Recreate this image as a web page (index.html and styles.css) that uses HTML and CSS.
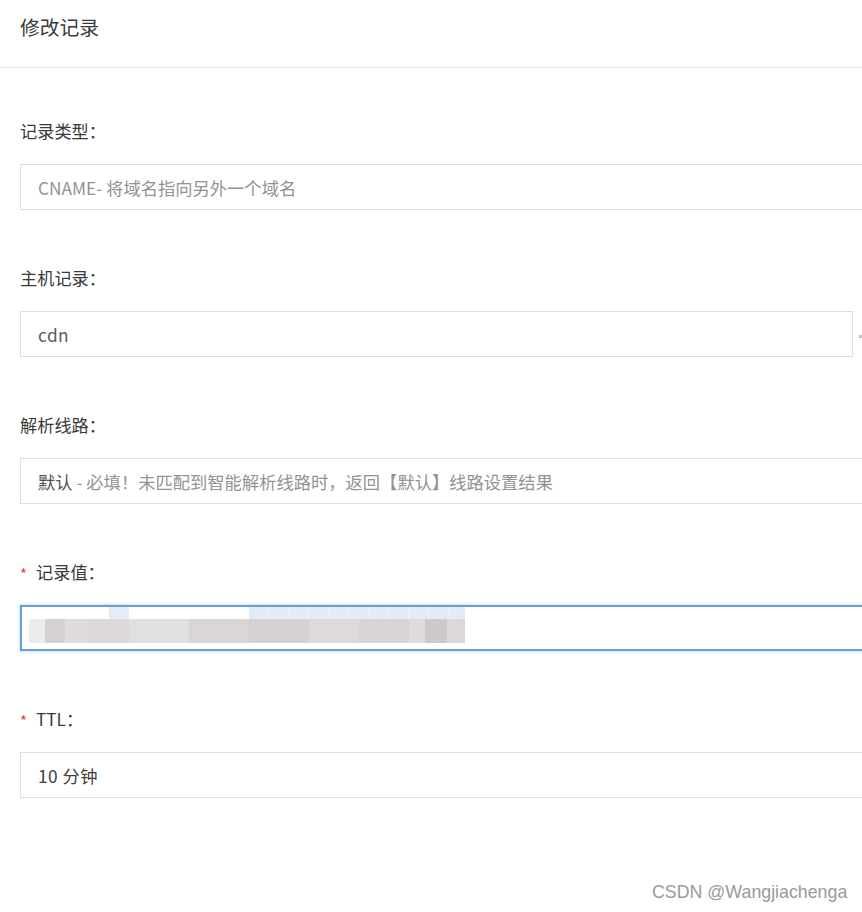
FILE: index.html
```html
<!DOCTYPE html>
<html lang="zh-CN">
<head>
<meta charset="utf-8">
<title>修改记录</title>
<link rel="stylesheet" href="styles.css">
</head>
<body>
<div class="page">
  <header class="header">
    <h1 class="title">修改记录</h1>
  </header>
  <form class="form">
    <div class="field">
      <div class="label">记录类型：</div>
      <div class="input wide"><span class="muted">CNAME- 将域名指向另外一个域名</span></div>
    </div>
    <div class="field">
      <div class="label">主机记录：</div>
      <div class="row">
        <div class="input host"><span class="val">cdn</span></div>
        <span class="dot"></span>
      </div>
    </div>
    <div class="field">
      <div class="label">解析线路：</div>
      <div class="input wide"><span class="strong">默认</span><span class="muted">&nbsp;- 必填！未匹配到智能解析线路时，返回【默认】线路设置结果</span></div>
    </div>
    <div class="field">
      <div class="label"><span class="req">*</span>记录值：</div>
      <div class="input wide focus">
        <div class="blur">
          <div class="blur-top">
            <span class="gap g1"></span><span class="tile t1"></span><span class="gap g2"></span><span class="tile t2"></span>
          </div>
          <div class="blur-strip"></div>
        </div>
      </div>
    </div>
    <div class="field">
      <div class="label"><span class="req">*</span>TTL：</div>
      <div class="input wide"><span class="val dark">10 分钟</span></div>
    </div>
  </form>
  <div class="watermark">CSDN @Wangjiachenga</div>
</div>
</body>
</html>
```
FILE: styles.css
```css
html, body {
  margin: 0;
  padding: 0;
  background: #ffffff;
}
body {
  width: 862px;
  height: 912px;
  overflow: hidden;
  font-family: "Noto Sans CJK SC", "Liberation Sans", sans-serif;
  color: #333;
}
.page {
  position: relative;
  width: 862px;
  height: 912px;
  overflow: hidden;
}
.header {
  height: 67px;
  border-bottom: 1px solid #ececec;
  display: flex;
  align-items: center;
  padding-left: 20px;
  box-sizing: content-box;
}
.title {
  margin: 0;
  font-size: 19.8px;
  font-weight: 400;
  color: #3a3a3a;
  line-height: 24px;
  padding-bottom: 14px;
}
.form {
  padding: 51px 0 0 20px;
  display: flex;
  flex-direction: column;
}
.field {
  margin-bottom: 56px;
}
.label {
  font-size: 17.2px;
  line-height: 24px;
  height: 24px;
  color: #3a3a3a;
  margin-bottom: 21px;
  display: flex;
  align-items: center;
}
.req {
  color: #e2483d;
  font-size: 15px;
  width: 16px;
  line-height: 24px;
  padding-top: 4px;
}
.row {
  display: flex;
  align-items: center;
}
.input {
  box-sizing: border-box;
  height: 46px;
  border: 1px solid #dedede;
  background: #fff;
  display: flex;
  align-items: center;
  padding-left: 17px;
  font-size: 17.3px;
  white-space: nowrap;
}
.wide {
  width: 880px;
}
.host {
  width: 833px;
}
.dot {
  width: 3px;
  height: 3px;
  background: #c4c4c4;
  margin-left: 6px;
  margin-top: 4px;
}
.muted {
  color: #939393;
}
.strong {
  color: #505050;
}
.val {
  color: #5a5a5a;
  letter-spacing: 0.5px;
}
.dark {
  color: #404040;
}
.focus {
  border: 2px solid #6b9fd6;
  box-shadow: 0 0 2px 1px #c9ddf2;
  padding-left: 7px;
  align-items: flex-start;
}
.blur {
  display: flex;
  flex-direction: column;
  width: 436px;
}
.blur-top {
  display: flex;
  height: 12px;
}
.gap.g1 { width: 80px; }
.gap.g2 { width: 120px; }
.tile {
  background: #e3edf7;
}
.tile.t1 { width: 20px; }
.tile.t2 {
  width: 216px;
  background: repeating-linear-gradient(90deg, #e1ecf6 0 19px, #ebf2f9 19px 20px);
}
.blur-strip {
  height: 24px;
  background: linear-gradient(90deg,
    #ececec 0 16px,
    #d6d2d2 16px 36px,
    #e0dcdc 36px 60px,
    #dcd8d8 60px 100px,
    #e2dfdf 100px 160px,
    #dbd6d6 160px 220px,
    #d7d2d2 220px 280px,
    #dedada 280px 330px,
    #d9d4d4 330px 380px,
    #e0dcdc 380px 396px,
    #cfcaca 396px 418px,
    #dcd8d8 418px 436px);
}
.watermark {
  position: absolute;
  left: 652px;
  top: 880px;
  font-family: "Liberation Sans", "Noto Sans", sans-serif;
  font-size: 17.8px;
  line-height: 24px;
  color: #9a9a9a;
  text-shadow: 0 0 1px #ffffff;
}
```
